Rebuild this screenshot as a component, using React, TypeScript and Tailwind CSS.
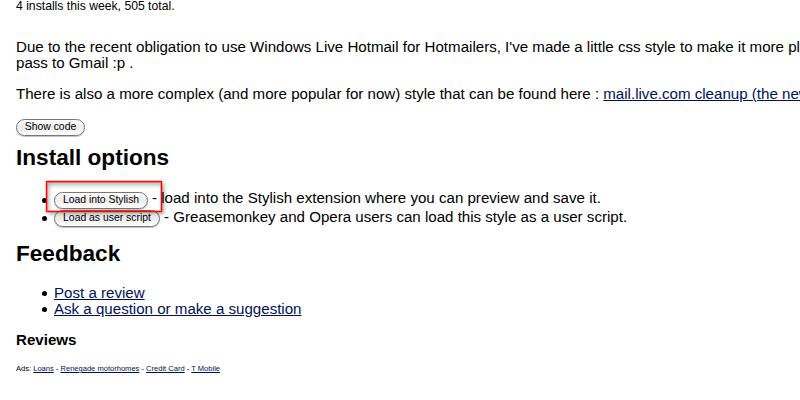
import type { ReactNode } from "react";

function PillButton({ width, children }: { width: string; children: ReactNode }) {
  return (
    <button
      className={`${width} h-[17px] shrink-0 rounded-full border border-[#777] bg-linear-to-b from-white via-[#ececec] to-white text-[10.4px] leading-[13px] pb-[2px] whitespace-nowrap shadow-[0_1px_1px_rgba(0,0,0,0.25)]`}
    >
      {children}
    </button>
  );
}

function Link({ children }: { children: ReactNode }) {
  return (
    <a href="#" className="text-[#001158] underline">
      {children}
    </a>
  );
}

function Bullet() {
  return <span className="mt-px mr-[7.5px] size-[5px] shrink-0 rounded-full bg-black" />;
}

export default function App() {
  return (
    <div className="h-[400px] w-[800px] overflow-hidden bg-white pl-4 font-['Liberation_Sans',Arial,sans-serif] text-[15.1px] leading-4 whitespace-nowrap text-black">
      <p className="h-[39px] pt-px text-[12.2px] leading-[10px]">4 installs this week, 505 total.</p>

      <p>
        Due to the recent obligation to use Windows Live Hotmail for Hotmailers, I've made a little css style to make it more pl
        <br />
        pass to Gmail :p .
      </p>
      <p className="mt-[15px]">
        There is also a more complex (and more popular for now) style that can be found here :{" "}
        <Link>mail.live.com cleanup (the new</Link>
      </p>

      <div className="mt-[17px] flex">
        <PillButton width="w-[69px]">Show code</PillButton>
      </div>

      <h2 className="mt-[9px] text-[22.6px] leading-[26px] font-bold">Install options</h2>

      <ul className="relative mt-5 pl-[25.5px]">
        <li className="flex h-[18px] items-center">
          <Bullet />
          <PillButton width="w-[94px]">Load into Stylish</PillButton>
          <span className="mb-1 ml-1">- load into the Stylish extension where you can preview and save it.</span>
        </li>
        <li className="flex h-[18px] items-center">
          <Bullet />
          <PillButton width="w-[106px]">Load as user script</PillButton>
          <span className="mb-0.5 ml-1">- Greasemonkey and Opera users can load this style as a user script.</span>
        </li>
        {/* highlight around the first option */}
        <li
          aria-hidden="true"
          className="absolute -top-[10px] left-[30px] h-[31px] w-[116px] border border-[#ff0000] shadow-[0_0_0_0.5px_rgba(255,0,0,0.4),inset_0_0_0_1px_rgba(255,0,0,0.3),2px_2px_4px_rgba(0,0,0,0.35),inset_2px_3px_4px_rgba(0,0,0,0.3)]"
        />
      </ul>

      <h2 className="mt-[14px] text-[22.6px] leading-[26px] font-bold">Feedback</h2>

      <ul className="mt-[18px] pl-[25.5px]">
        <li className="flex items-center">
          <Bullet />
          <Link>Post a review</Link>
        </li>
        <li className="flex items-center">
          <Bullet />
          <Link>Ask a question or make a suggestion</Link>
        </li>
      </ul>

      <h3 className="mt-[15px] font-bold">Reviews</h3>

      <p className="mt-4 text-[7.55px] leading-[9px]">
        Ads: <Link>Loans</Link> - <Link>Renegade motorhomes</Link> - <Link>Credit Card</Link> - <Link>T Mobile</Link>
      </p>
    </div>
  );
}
